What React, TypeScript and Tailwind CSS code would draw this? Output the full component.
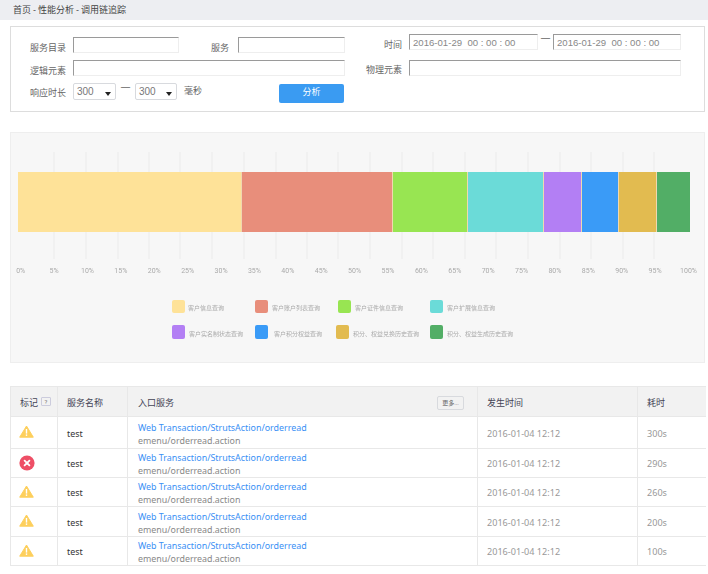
import React from 'react'

const segments = [
  { color: '#fee298', x: 18, w: 223 },
  { color: '#e88e7b', x: 242, w: 150 },
  { color: '#98e552', x: 393, w: 74 },
  { color: '#6bdbd8', x: 468, w: 75 },
  { color: '#b37ff4', x: 544, w: 37 },
  { color: '#3a9bf7', x: 582, w: 36 },
  { color: '#e2bb50', x: 619, w: 37 },
  { color: '#52ae66', x: 657, w: 33 },
]

const gridLines = [54, 86, 118, 149, 180, 212, 244, 276, 307, 338, 370, 402, 433, 465, 496, 528, 560, 591, 623, 654]

const ticks = Array.from({ length: 21 }, (_, i) => `${i * 5}%`)

const legendTop = [
  { color: '#fee298', label: '客户信息查询', w: 'w-[83px]', gap: 'gap-[3px]' },
  { color: '#e88e7b', label: '客户账户列表查询', w: 'w-[83px]', gap: 'gap-[4px]' },
  { color: '#98e552', label: '客户证件信息查询', w: 'w-[92px]', gap: 'gap-[4px]' },
  { color: '#6bdbd8', label: '客户扩展信息查询', w: 'w-[90px]', gap: 'gap-[4px]' },
]

const legendBottom = [
  { color: '#b37ff4', label: '客户实名制状态查询', w: 'w-[83px]', gap: 'gap-[4px]' },
  { color: '#3a9bf7', label: '客户积分权益查询', w: 'w-[81px]', gap: 'gap-[6px]' },
  { color: '#e2bb50', label: '积分、权益兑换历史查询', w: 'w-[94px]', gap: 'gap-[4px]' },
  { color: '#52ae66', label: '积分、权益生成历史查询', w: 'w-[90px]', gap: 'gap-[4px]' },
]

const rows = [
  { level: 'warn', time: '300s', h: 'h-[32px]' },
  { level: 'error', time: '290s', h: 'h-[29px]' },
  { level: 'warn', time: '260s', h: 'h-[29px]' },
  { level: 'warn', time: '200s', h: 'h-[30px]' },
  { level: 'warn', time: '100s', h: 'h-[28px]' },
]

const inputCls =
  'h-[16px] border border-[#eeeeee] border-t-[#9a9a9a] border-l-[#9a9a9a] bg-white text-[#888] outline-none px-[3px]'
const dateCls = "text-[9.6px] font-['Liberation_Sans',sans-serif]"
const bodyFont = "font-['Noto_Sans','Noto_Sans_CJK_SC',sans-serif]"

function WarnIcon() {
  return (
    <svg width="15" height="13" viewBox="0 0 15 13">
      <path d="M7.5 1 L14.3 12.2 H0.7 Z" fill="#fdcf5c" stroke="#fdcf5c" strokeWidth="1" strokeLinejoin="round" />
      <rect x="6.8" y="4" width="1.4" height="4.6" fill="#fff" />
      <rect x="6.8" y="9.4" width="1.4" height="1.5" fill="#fff" />
    </svg>
  )
}

function ErrorIcon() {
  return (
    <svg width="16" height="16" viewBox="0 0 16 16">
      <circle cx="8" cy="8" r="7.6" fill="#ee4f66" />
      <path d="M5.6 5.6 L10.4 10.4 M10.4 5.6 L5.6 10.4" stroke="#fff" strokeWidth="1.8" strokeLinecap="round" />
    </svg>
  )
}

function Caret() {
  return <span className="absolute right-[4px] top-[8px] border-x-[3px] border-t-[4px] border-x-transparent border-t-[#222]" />
}

function Select({ width }: { width: string }) {
  return (
    <div className={`${width} relative h-[17px] border border-[#d8dade] rounded-[2px] bg-white font-['Liberation_Sans',sans-serif] text-[10px] leading-[15px] text-[#777] pl-[3px]`}>
      300
      <Caret />
    </div>
  )
}

function Label({ className, children }: { className: string; children: React.ReactNode }) {
  return <span className={`${className} text-right text-[9px] text-[#666]`}>{children}</span>
}

export default function App() {
  return (
    <div className="w-[708px] h-[574px] overflow-hidden bg-white font-['Roboto','Noto_Sans_CJK_SC',sans-serif]">
      <div className="h-[20px] bg-[#edeef2] pl-[13px] text-[9px] leading-[20px] text-[#444]">首页 - 性能分析 - 调用链追踪</div>

      <div className="mt-[6px] mx-[10px] w-[695px] h-[86px] border border-[#dddddd] flex">
        <div className="w-[350px] pt-[10px] pl-[19px] flex flex-col gap-[7px]">
          <div className="flex items-center h-[16px]">
            <Label className="w-[36px] pt-[8px]">服务目录</Label>
            <input className={`${inputCls} text-[10px] ml-[7px] w-[106px]`} />
            <Label className="w-[18px] ml-[32px] pt-[8px]">服务</Label>
            <input className={`${inputCls} text-[10px] ml-[9px] w-[107px]`} />
          </div>
          <div className="flex items-center h-[16px]">
            <Label className="w-[36px] pt-[8px]">逻辑元素</Label>
            <input className={`${inputCls} text-[10px] ml-[7px] w-[272px]`} />
          </div>
          <div className="flex items-center h-[17px]">
            <Label className="w-[36px] pt-[4px]">响应时长</Label>
            <div className="ml-[7px]">
              <Select width="w-[43px]" />
            </div>
            <span className="w-[19px] pb-[6px] text-center text-[10px] text-[#666]">一</span>
            <Select width="w-[42px]" />
            <span className="ml-[7px] pt-[1px] text-[9px] text-[#666]">毫秒</span>
            <button className="ml-[77px] w-[65px] h-[19px] mt-[3px] rounded-[2px] bg-[#3a9bf2] text-[9px] text-white">分析</button>
          </div>
        </div>
        <div className="pt-[7px] pl-[5px] flex flex-col gap-[10px]">
          <div className="flex items-center h-[16px]">
            <Label className="w-[36px] pt-[8px]">时间</Label>
            <input className={`${inputCls} ${dateCls} ml-[7px] w-[129px]`} defaultValue="2016-01-29  00 : 00 : 00" />
            <span className="w-[15px] pb-[6px] text-center text-[10px] text-[#666]">一</span>
            <input className={`${inputCls} ${dateCls} w-[128px]`} defaultValue="2016-01-29  00 : 00 : 00" />
          </div>
          <div className="flex items-center h-[16px]">
            <Label className="w-[36px] pt-[6px]">物理元素</Label>
            <input className={`${inputCls} text-[10px] ml-[7px] w-[272px]`} />
          </div>
        </div>
      </div>

      <div className="mt-[20px] mx-[10px] w-[695px] h-[231px] border border-[#eeeeee] bg-[#f7f7f7]">
        <svg width="693" height="128" viewBox="11 133 693 128" className="block">
          {gridLines.map((x) => (
            <rect key={x} x={x - 1} y={152} width="2" height="107" fill="#f1f1f1" />
          ))}
          <rect x="18" y="172" width="672" height="60" fill="#f0d8b0" />
          {segments.map((s) => (
            <rect key={s.x} x={s.x} y={172} width={s.w} height="60" fill={s.color} />
          ))}
        </svg>
        <div className="mt-[5px] ml-[-7px] grid grid-cols-[repeat(21,33.4px)] blur-[0.3px] text-[7px] leading-[10px] text-[#aaa]">
          {ticks.map((t) => (
            <span key={t} className="text-center">{t}</span>
          ))}
        </div>
        <div className="mt-[24px] ml-[161px] flex blur-[0.3px]">
          {legendTop.map((l) => (
            <div key={l.label} className={`${l.w} ${l.gap} flex items-center`}>
              <span className="w-[13px] h-[13px] rounded-[2px] shrink-0" style={{ background: l.color }} />
              <span className="pt-[2px] text-[6px] whitespace-nowrap text-[#aaa]">{l.label}</span>
            </div>
          ))}
        </div>
        <div className="mt-[12px] ml-[161px] flex blur-[0.3px]">
          {legendBottom.map((l) => (
            <div key={l.label} className={`${l.w} ${l.gap} flex items-center`}>
              <span className="w-[13px] h-[14px] rounded-[2px] shrink-0" style={{ background: l.color }} />
              <span className="pt-[2px] text-[6px] whitespace-nowrap text-[#aaa]">{l.label}</span>
            </div>
          ))}
        </div>
      </div>

      <table className="mt-[23px] ml-[10px] w-[695px] table-fixed border-collapse text-[9px]">
        <colgroup>
          <col className="w-[47px]" />
          <col className="w-[70px]" />
          <col className="w-[350px]" />
          <col className="w-[160px]" />
          <col className="w-[68px]" />
        </colgroup>
        <thead>
          <tr className="h-[30px] bg-[#f2f2f2] text-[#445] text-left">
            <th className="border border-[#e8e8e8] font-normal pl-[9px] pt-[4px]">
              <span className="inline-flex items-center gap-[3px]">
                标记
                <span className="mb-[5px] w-[10px] h-[9px] rounded-[1px] border border-[#ccd] text-[6px] leading-[7px] text-center text-[#777]">?</span>
              </span>
            </th>
            <th className="border border-[#e8e8e8] font-normal pl-[9px] pt-[4px]">服务名称</th>
            <th className="border border-[#e8e8e8] font-normal pl-[10px] pt-[4px]">
              <div className="flex items-center justify-between pr-[13px]">
                入口服务
                <span className="mb-[2px] w-[27px] h-[14px] border border-[#d8dade] rounded-[2px] text-[6px] leading-[12px] text-center text-[#666]">更多...</span>
              </div>
            </th>
            <th className="border border-[#e8e8e8] font-normal pl-[9px] pt-[4px]">发生时间</th>
            <th className="border border-[#e8e8e8] border-r-0 font-normal pl-[9px] pt-[4px]">耗时</th>
          </tr>
        </thead>
        <tbody className={bodyFont}>
          {rows.map((r) => (
            <tr key={r.time} className={r.h}>
              <td className="border border-[#e8e8e8] pl-[8px]">
                <span className={r.level === 'warn' ? 'flex pb-[2px]' : 'flex'}>
                  {r.level === 'warn' ? <WarnIcon /> : <ErrorIcon />}
                </span>
              </td>
              <td className="border border-[#e8e8e8] pl-[9px] pt-[2px] text-[8.9px] text-[#333]">test</td>
              <td className="border border-[#e8e8e8] pl-[10px] pt-[2px] text-[8.9px] leading-[13px]">
                <div className="text-[#3a90f5]">Web Transaction/StrutsAction/orderread</div>
                <div className="text-[#888]">emenu/orderread.action</div>
              </td>
              <td className="border border-[#e8e8e8] pl-[9px] pt-[2px] text-[9.1px] text-[#999]">2016-01-04 12:12</td>
              <td className="border border-[#e8e8e8] border-r-0 pl-[9px] pt-[2px] text-[9.1px] text-[#999]">{r.time}</td>
            </tr>
          ))}
        </tbody>
      </table>
    </div>
  )
}
